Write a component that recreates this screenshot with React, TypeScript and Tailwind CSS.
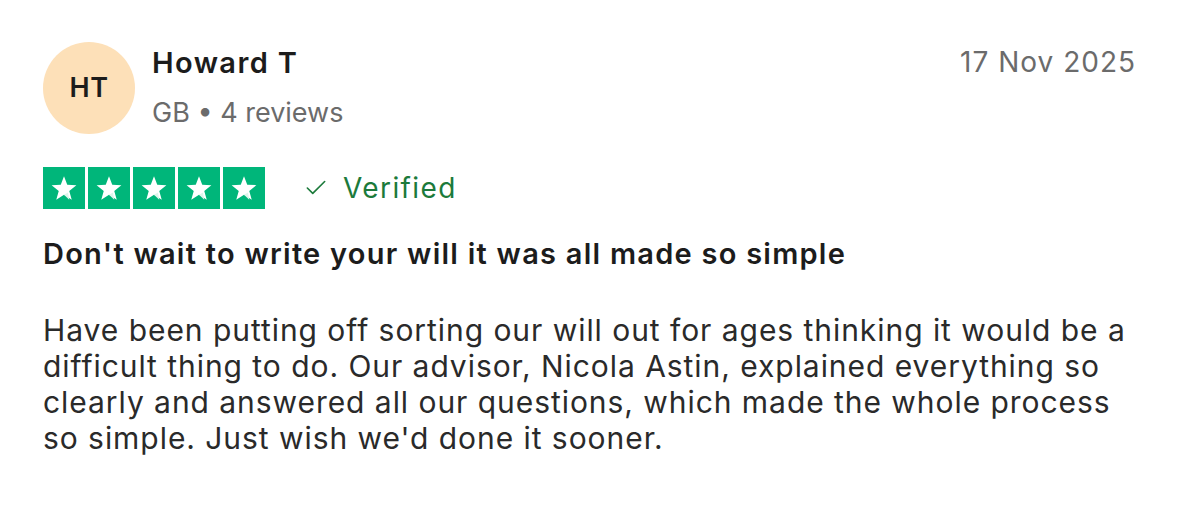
import { Check } from "lucide-react";

function Star() {
  return (
    <div className="flex h-[42px] w-[42px] items-center justify-center bg-[#00b67a]">
      <svg viewBox="0 0 24 24" className="h-[30px] w-[30px]">
        <path fill="#fff" d="M12 2.5l2.6 6.9 7.3.3-5.7 4.6 2 7.1L12 17.3l-6.2 4.1 2-7.1-5.7-4.6 7.3-.3z" />
        <path fill="#dcf5ea" d="M15.2 15.6l1 5.8L12 17.3z" />
      </svg>
    </div>
  );
}

export default function App() {
  return (
    <div
      className="h-[525px] w-[1200px] bg-white pl-[43px] pr-[64px] pt-[42px] text-[#1c1c1c]"
      style={{ fontFamily: "Inter, 'Liberation Sans', sans-serif" }}
    >
      {/* Header */}
      <div className="flex items-start justify-between">
        <div className="flex items-center gap-[17px]">
          <div className="flex h-[92px] w-[92px] items-center justify-center rounded-full bg-[#fde0b8] text-[27px] font-semibold tracking-[0.5px] text-[#1c1c1c]">
            HT
          </div>
          <div className="flex flex-col gap-[18px]">
            <p className="text-[29px] font-semibold leading-[32px] tracking-[1.4px]">Howard T</p>
            <p className="text-[27px] leading-[32px] text-[#6b6b6b]">GB • 4 reviews</p>
          </div>
        </div>
        <p className="mt-[4px] text-[28px] leading-[32px] tracking-[1px] text-[#6b6b6b]">17 Nov 2025</p>
      </div>

      {/* Rating */}
      <div className="mt-[33px] flex items-center">
        <div className="flex gap-[3px]">
          <Star />
          <Star />
          <Star />
          <Star />
          <Star />
        </div>
        <div className="ml-[38px] flex items-center gap-[14px] text-[#1c7a3b]">
          <Check className="h-[26px] w-[26px]" strokeWidth={1.5} />
          <span className="text-[28px] leading-[32px] tracking-[1.4px]">Verified</span>
        </div>
      </div>

      {/* Title */}
      <h2 className="mt-[27px] text-[29px] font-semibold leading-[36px] tracking-[1.25px]">
        Don't wait to write your will it was all made so simple
      </h2>

      {/* Body */}
      <p className="mt-[40px] text-[30px] leading-[36px] tracking-[0.95px] text-[#2a2a2a]">
        Have been putting off sorting our will out for ages thinking it would be a difficult thing to do. Our advisor,
        Nicola Astin, explained everything so clearly and answered all our questions, which made the whole process so
        simple. Just wish we'd done it sooner.
      </p>
    </div>
  );
}
